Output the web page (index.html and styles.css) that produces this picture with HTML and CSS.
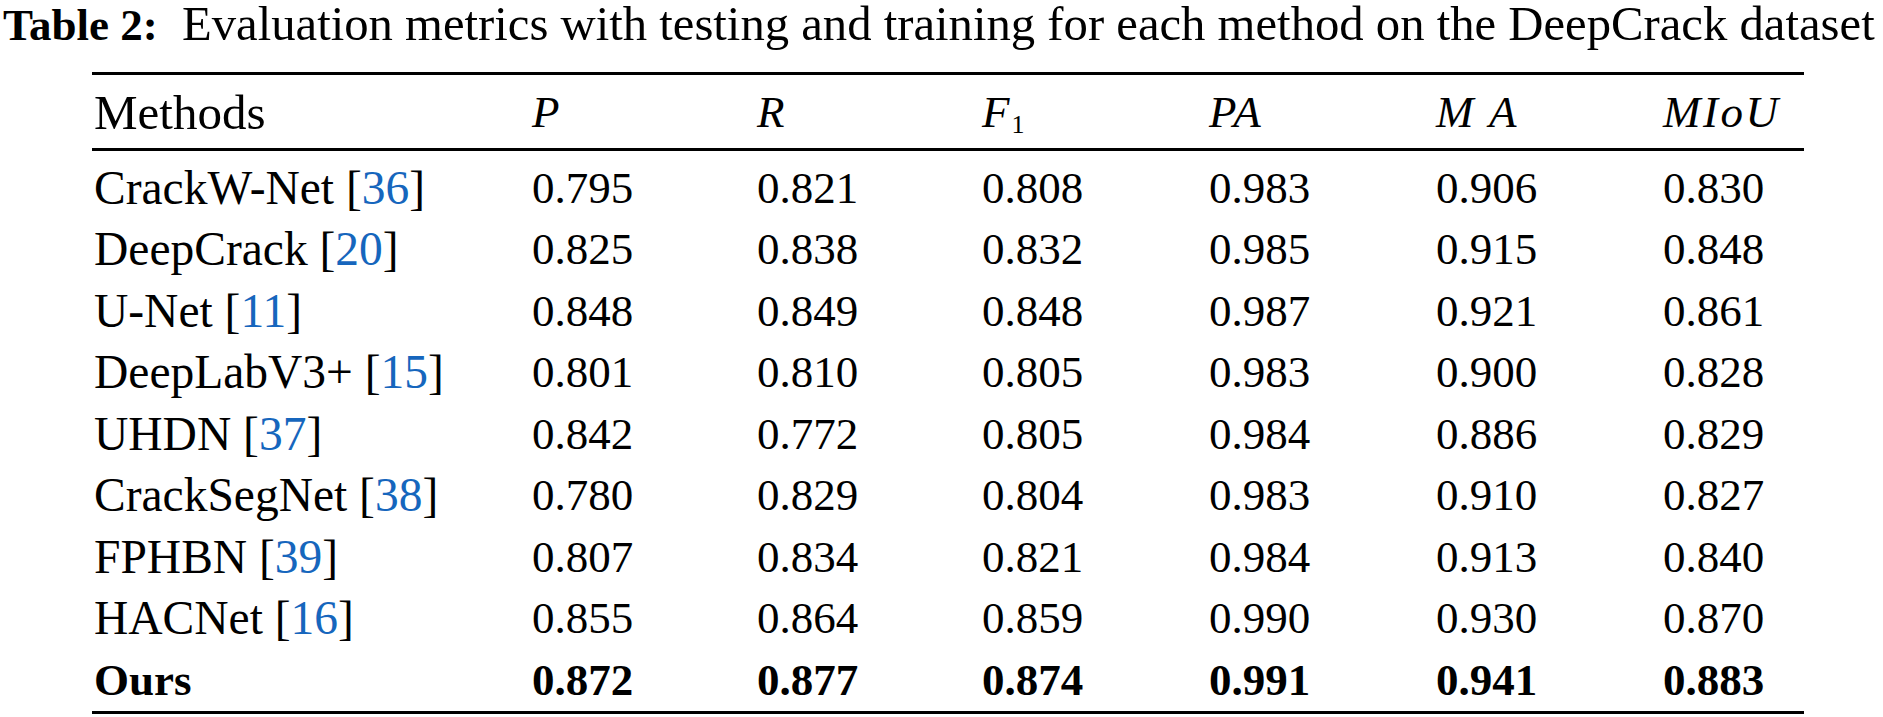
FILE: index.html
```html
<!DOCTYPE html>
<html>
<head>
<meta charset="utf-8">
<link rel="stylesheet" href="styles.css">
</head>
<body>
<div class="caption"><b>Table 2:</b><span class="ctext">&nbsp; Evaluation metrics with testing and training for each method on the DeepCrack dataset</span></div>
<div class="table">
  <div class="row head">
    <div class="c first">Methods</div>
    <div class="c"><i>P</i></div>
    <div class="c"><i>R</i></div>
    <div class="c"><i>F</i><sub>1</sub></div>
    <div class="c"><i class="m">PA</i></div>
    <div class="c"><i class="m">M A</i></div>
    <div class="c"><i class="m">MIoU</i></div>
  </div>
  <div class="body">
    <div class="row">
      <div class="c first">CrackW-Net [<span class="ref">36</span>]</div>
      <div class="c">0.795</div><div class="c">0.821</div><div class="c">0.808</div><div class="c">0.983</div><div class="c">0.906</div><div class="c">0.830</div>
    </div>
    <div class="row">
      <div class="c first">DeepCrack [<span class="ref">20</span>]</div>
      <div class="c">0.825</div><div class="c">0.838</div><div class="c">0.832</div><div class="c">0.985</div><div class="c">0.915</div><div class="c">0.848</div>
    </div>
    <div class="row">
      <div class="c first">U-Net [<span class="ref">11</span>]</div>
      <div class="c">0.848</div><div class="c">0.849</div><div class="c">0.848</div><div class="c">0.987</div><div class="c">0.921</div><div class="c">0.861</div>
    </div>
    <div class="row">
      <div class="c first">DeepLabV3+ [<span class="ref">15</span>]</div>
      <div class="c">0.801</div><div class="c">0.810</div><div class="c">0.805</div><div class="c">0.983</div><div class="c">0.900</div><div class="c">0.828</div>
    </div>
    <div class="row">
      <div class="c first">UHDN [<span class="ref">37</span>]</div>
      <div class="c">0.842</div><div class="c">0.772</div><div class="c">0.805</div><div class="c">0.984</div><div class="c">0.886</div><div class="c">0.829</div>
    </div>
    <div class="row">
      <div class="c first">CrackSegNet [<span class="ref">38</span>]</div>
      <div class="c">0.780</div><div class="c">0.829</div><div class="c">0.804</div><div class="c">0.983</div><div class="c">0.910</div><div class="c">0.827</div>
    </div>
    <div class="row">
      <div class="c first">FPHBN [<span class="ref">39</span>]</div>
      <div class="c">0.807</div><div class="c">0.834</div><div class="c">0.821</div><div class="c">0.984</div><div class="c">0.913</div><div class="c">0.840</div>
    </div>
    <div class="row">
      <div class="c first">HACNet [<span class="ref">16</span>]</div>
      <div class="c">0.855</div><div class="c">0.864</div><div class="c">0.859</div><div class="c">0.990</div><div class="c">0.930</div><div class="c">0.870</div>
    </div>
    <div class="row bold">
      <div class="c first">Ours</div>
      <div class="c">0.872</div><div class="c">0.877</div><div class="c">0.874</div><div class="c">0.991</div><div class="c">0.941</div><div class="c">0.883</div>
    </div>
  </div>
</div>
</body>
</html>
```
FILE: styles.css
```css
html, body {
  margin: 0;
  padding: 0;
  background: #ffffff;
}
body {
  font-family: "Liberation Serif", "Times New Roman", serif;
  color: #000;
  width: 1883px;
  height: 717px;
  overflow: hidden;
}
.caption {
  font-size: 45px;
  line-height: 48px;
  height: 48px;
  padding-left: 3px;
  white-space: nowrap;
}
.caption b {
  font-weight: bold;
}
.ctext {
  font-size: 48.7px;
}
.table {
  margin-top: 24px;
  margin-left: 92px;
  width: 1712px;
  border-top: 3px solid #000;
  border-bottom: 3px solid #000;
  font-size: 45px;
}
.row {
  display: grid;
  grid-template-columns: 440px 225px 225px 227px 227px 227px 141px;
  height: 61.5px;
  line-height: 61.5px;
  white-space: nowrap;
}
.head {
  padding-top: 7px;
  padding-bottom: 4px;
  border-bottom: 3px solid #000;
}
.body {
  padding-top: 7px;
}
.c.first {
  padding-left: 2px;
  font-size: 47.5px;
}
.head .c.first {
  font-size: 49px;
}
.bold .c.first {
  font-size: 45px;
}
.ref {
  color: #1666bd;
}
.bold {
  font-weight: bold;
}
i.m {
  letter-spacing: 2.5px;
}
sub {
  font-size: 26px;
  line-height: 0;
  vertical-align: -6px;
  margin-left: 2px;
}
```
